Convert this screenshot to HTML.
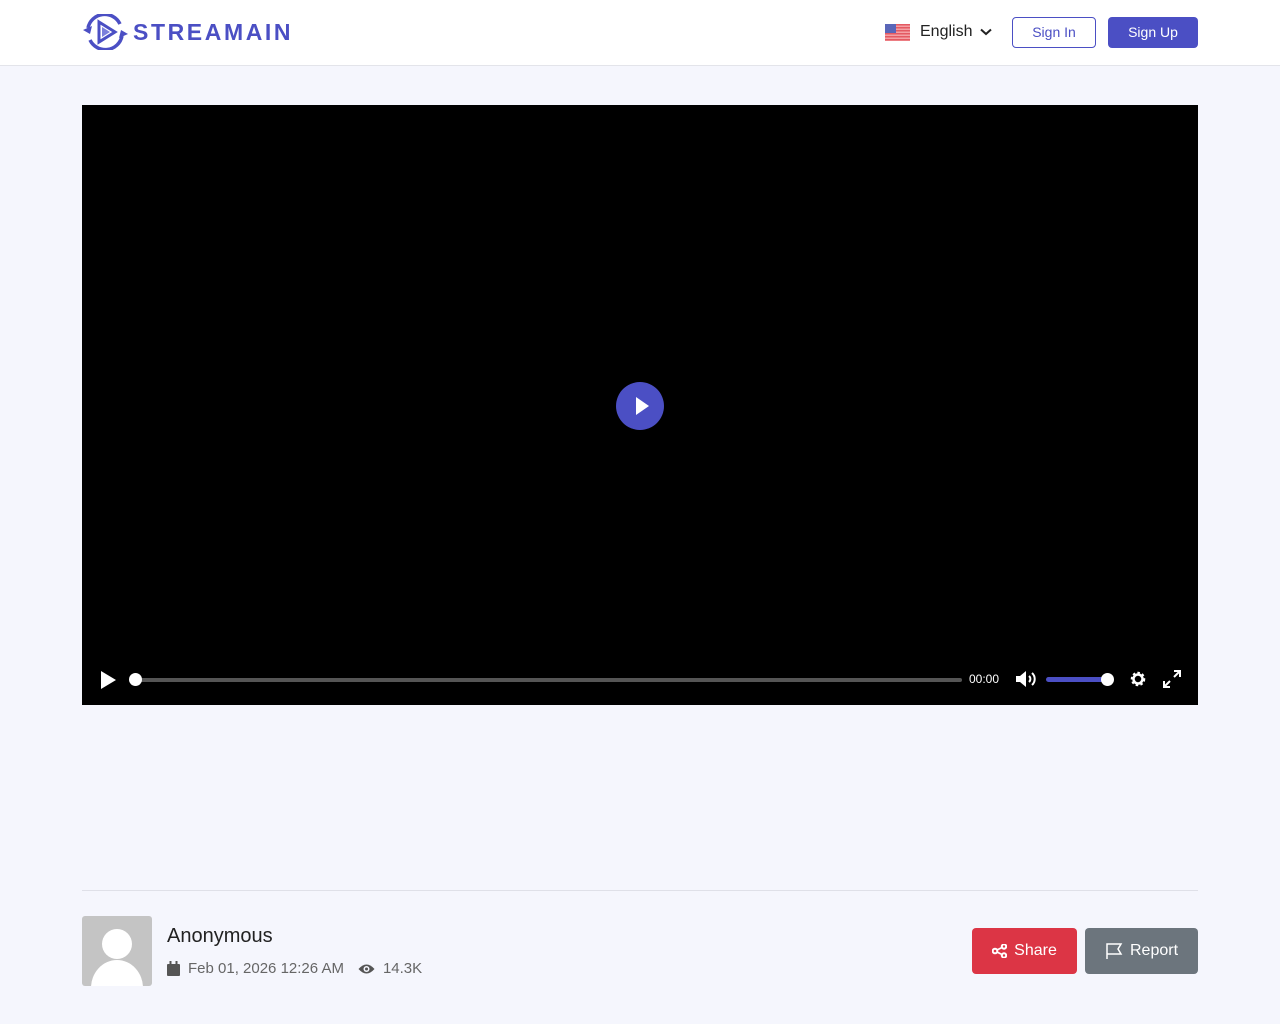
<!DOCTYPE html>
<html><head><meta charset="utf-8"><style>
*{box-sizing:border-box;margin:0;padding:0}
body{width:1280px;height:1024px;background:#f5f6fd;font-family:"Liberation Sans",sans-serif;position:relative;overflow:hidden}
.hdr{position:absolute;left:0;top:0;width:1280px;height:66px;background:#fff;border-bottom:1px solid #e3e4ea}
.logo{position:absolute;left:82px;top:14px;display:flex;align-items:center}
.logo span{color:#4b4fc4;font-weight:bold;font-size:23px;letter-spacing:2.6px;margin-left:3px}
.lang{position:absolute;left:885px;top:23px;display:flex;align-items:center;font-size:16px;color:#222}
.btn{position:absolute;top:17px;height:31px;border-radius:4px;font-size:14px;display:flex;align-items:center;justify-content:center;padding-bottom:2px}
.video{position:absolute;left:82px;top:105px;width:1116px;height:600px;background:#000}
.play{position:absolute;left:534px;top:277px;width:48px;height:48px;border-radius:50%;background:#4b4fc4}
.line{position:absolute;left:82px;top:890px;width:1116px;height:1px;background:#dfe0e8}
.av{position:absolute;left:82px;top:916px;width:70px;height:70px;background:#c4c4c4;border-radius:3px;overflow:hidden}
.b2{position:absolute;top:928px;height:46px;border-radius:4px;color:#fff;font-size:16px;display:flex;align-items:center;justify-content:center;gap:7px}
</style></head><body>
<div class="hdr">
 <div class="logo">
  <svg width="48" height="36" viewBox="0 0 48 36"><path d="M6 14 A17 17 0 0 1 38 10" fill="none" stroke="#4b4fc4" stroke-width="3.5"/><path d="M40 22 A17 17 0 0 1 8 26" fill="none" stroke="#4b4fc4" stroke-width="3.5"/><path d="M1 16 L10 12 L8 20Z" fill="#4b4fc4"/><path d="M46 20 L37 24 L39 16Z" fill="#4b4fc4"/><path d="M17 8 L33 18 L17 28Z" fill="none" stroke="#4b4fc4" stroke-width="3"/><path d="M20 13 L28 18 L20 23Z" fill="#7b7fdc"/></svg>
  <span>STREAMAIN</span>
 </div>
 <div class="lang">
  <svg width="25" height="17" viewBox="0 0 25 17"><rect width="25" height="17" fill="#f4a0a4"/><g fill="#e45a62"><rect y="0" width="25" height="1.5"/><rect y="3" width="25" height="1.5"/><rect y="6" width="25" height="1.5"/><rect y="9" width="25" height="1.5"/><rect y="12" width="25" height="1.5"/><rect y="15" width="25" height="1.5"/></g><rect width="11" height="9" fill="#5a66b8"/></svg>
  <span style="margin-left:10px">English</span>
  <svg style="margin-left:8px" width="12" height="8" viewBox="0 0 12 8"><path d="M1 1.5 L6 6 L11 1.5" fill="none" stroke="#222" stroke-width="2"/></svg>
 </div>
 <div class="btn" style="left:1012px;width:84px;border:1px solid #4b4fc4;color:#4b4fc4">Sign In</div>
 <div class="btn" style="left:1108px;width:90px;background:#4b4fc4;color:#fff">Sign Up</div>
</div>
<div class="video">
 <div class="play"><svg width="48" height="48"><path d="M20 15 L33 24 L20 33Z" fill="#fff"/></svg></div>
 <svg style="position:absolute;left:18px;top:565px" width="18" height="20"><path d="M1 1 L16 10 L1 19Z" fill="#fff"/></svg>
 <div style="position:absolute;left:52px;top:573px;width:828px;height:4px;background:#555;border-radius:2px"></div>
 <div style="position:absolute;left:47px;top:568px;width:13px;height:13px;background:#fff;border-radius:50%"></div>
 <div style="position:absolute;left:887px;top:567px;color:#fff;font-size:12px">00:00</div>
 <svg style="position:absolute;left:933px;top:565px" width="22" height="18" viewBox="0 0 22 18"><path d="M1 6 H5 L11 1 V17 L5 12 H1Z" fill="#fff"/><path d="M14 6 A4 4 0 0 1 14 12 M17 3 A8 8 0 0 1 17 15" fill="none" stroke="#fff" stroke-width="2"/></svg>
 <div style="position:absolute;left:964px;top:572px;width:62px;height:5px;background:#4b4fc4;border-radius:3px"></div>
 <div style="position:absolute;left:1019px;top:568px;width:13px;height:13px;background:#fff;border-radius:50%"></div>
 <svg style="position:absolute;left:1047px;top:565px" width="18" height="18" viewBox="0 0 18 18"><circle cx="9" cy="9" r="5.5" fill="none" stroke="#fff" stroke-width="3.5" stroke-dasharray="2.2 2"/><circle cx="9" cy="9" r="4.5" fill="none" stroke="#fff" stroke-width="2.5"/></svg>
 <svg style="position:absolute;left:1081px;top:565px" width="18" height="18" viewBox="0 0 18 18"><path d="M11 1 H17 V7 M17 1 L11 7 M7 17 H1 V11 M1 17 L7 11" fill="none" stroke="#fff" stroke-width="2"/></svg>
</div>
<div class="line"></div>
<div class="av"><svg width="70" height="70"><circle cx="35" cy="28" r="15" fill="#fff"/><ellipse cx="35" cy="72" rx="26" ry="28" fill="#fff"/></svg></div>
<div style="position:absolute;left:167px;top:925px;font-size:20px;color:#222">Anonymous</div>
<div style="position:absolute;left:167px;top:960px;font-size:15px;color:#666;display:flex;align-items:center">
 <svg width="13" height="15" viewBox="0 0 13 15"><rect x="0" y="3" width="13" height="12" rx="1" fill="#555"/><rect x="2.5" y="0" width="2" height="4" fill="#555"/><rect x="8.5" y="0" width="2" height="4" fill="#555"/></svg>
 <span style="margin-left:8px">Feb 01, 2026 12:26 AM</span>
 <svg style="margin-left:14px" width="17" height="12" viewBox="0 0 17 12"><path d="M0.5 6 Q8.5 -3 16.5 6 Q8.5 15 0.5 6Z" fill="#555"/><circle cx="8.5" cy="6" r="3" fill="#f5f6fd"/><circle cx="8.5" cy="6" r="1.5" fill="#555"/></svg>
 <span style="margin-left:8px">14.3K</span>
</div>
<div class="b2" style="left:972px;width:105px;background:#dc3545"><svg width="15" height="14" viewBox="0 0 15 14"><circle cx="3" cy="7" r="2.3" fill="none" stroke="#fff" stroke-width="2"/><circle cx="12" cy="2.5" r="2.2" fill="none" stroke="#fff" stroke-width="2"/><circle cx="12" cy="11.5" r="2.2" fill="none" stroke="#fff" stroke-width="2"/><path d="M5 6 L10 3.5 M5 8 L10 10.5" stroke="#fff" stroke-width="1.8"/></svg>Share</div>
<div class="b2" style="left:1085px;width:113px;background:#6c757d"><svg width="18" height="18" viewBox="0 0 18 18"><path d="M2 17 V2 H16 L13 7 L16 12 H2" fill="none" stroke="#fff" stroke-width="1.5"/></svg>Report</div>
</body></html>
